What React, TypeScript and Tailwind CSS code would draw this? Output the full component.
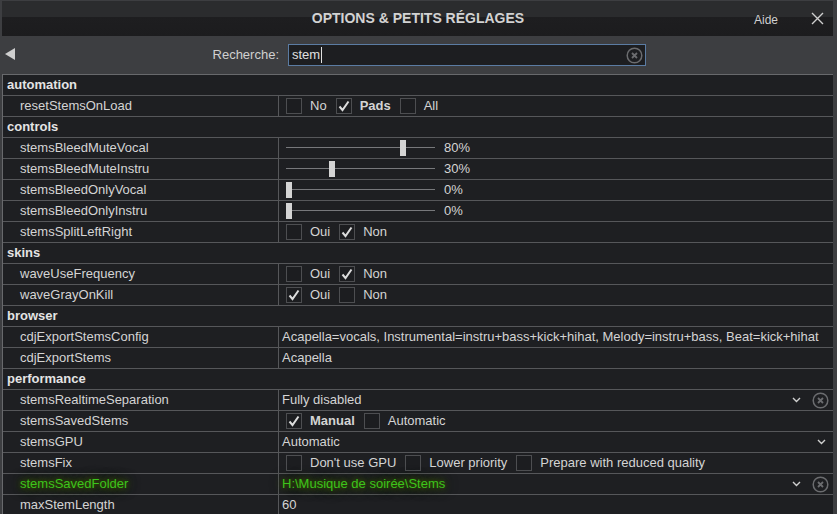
import React from 'react';

type Check = { label: string; checked?: boolean; bold?: boolean };

type Row =
  | { kind: 'cat'; name: string }
  | { kind: 'checks'; name: string; items: Check[] }
  | { kind: 'slider'; name: string; value: number }
  | { kind: 'text'; name: string; value: string }
  | { kind: 'select'; name: string; value: string; clear?: boolean; green?: boolean };

const rows: Row[] = [
  { kind: 'cat', name: 'automation' },
  {
    kind: 'checks',
    name: 'resetStemsOnLoad',
    items: [{ label: 'No' }, { label: 'Pads', checked: true, bold: true }, { label: 'All' }],
  },
  { kind: 'cat', name: 'controls' },
  { kind: 'slider', name: 'stemsBleedMuteVocal', value: 80 },
  { kind: 'slider', name: 'stemsBleedMuteInstru', value: 30 },
  { kind: 'slider', name: 'stemsBleedOnlyVocal', value: 0 },
  { kind: 'slider', name: 'stemsBleedOnlyInstru', value: 0 },
  { kind: 'checks', name: 'stemsSplitLeftRight', items: [{ label: 'Oui' }, { label: 'Non', checked: true }] },
  { kind: 'cat', name: 'skins' },
  { kind: 'checks', name: 'waveUseFrequency', items: [{ label: 'Oui' }, { label: 'Non', checked: true }] },
  { kind: 'checks', name: 'waveGrayOnKill', items: [{ label: 'Oui', checked: true }, { label: 'Non' }] },
  { kind: 'cat', name: 'browser' },
  {
    kind: 'text',
    name: 'cdjExportStemsConfig',
    value: 'Acapella=vocals, Instrumental=instru+bass+kick+hihat, Melody=instru+bass, Beat=kick+hihat',
  },
  { kind: 'text', name: 'cdjExportStems', value: 'Acapella' },
  { kind: 'cat', name: 'performance' },
  { kind: 'select', name: 'stemsRealtimeSeparation', value: 'Fully disabled', clear: true },
  {
    kind: 'checks',
    name: 'stemsSavedStems',
    items: [{ label: 'Manual', checked: true, bold: true }, { label: 'Automatic' }],
  },
  { kind: 'select', name: 'stemsGPU', value: 'Automatic' },
  {
    kind: 'checks',
    name: 'stemsFix',
    items: [{ label: "Don't use GPU" }, { label: 'Lower priority' }, { label: 'Prepare with reduced quality' }],
  },
  { kind: 'select', name: 'stemsSavedFolder', value: 'H:\\Musique de soirée\\Stems', clear: true, green: true },
  { kind: 'text', name: 'maxStemLength', value: '60' },
];

// green highlight for the recently changed setting
const glow = 'text-[#3cc41c] [text-shadow:0_0_5px_#3f5c04,0_0_9px_#3a5504,0_0_14px_#2c4203]';

function Box({ checked }: { checked?: boolean }) {
  return (
    <span className="flex h-[16px] w-[16px] shrink-0 items-center justify-center border border-[#4d4e51] bg-[#1c1d20]">
      {checked && (
        <svg width="14" height="14" viewBox="0 0 14 14">
          <polyline points="2.5,7.5 5.5,11 11.5,2.5" fill="none" stroke="#dcdcdc" strokeWidth="2" />
        </svg>
      )}
    </span>
  );
}

function ClearIcon() {
  return (
    <svg width="17" height="17" viewBox="0 0 17 17">
      <circle cx="8.5" cy="8.5" r="7.3" fill="none" stroke="#6b6c6f" strokeWidth="1.5" />
      <path d="M6 6 L11 11 M11 6 L6 11" stroke="#6b6c6f" strokeWidth="1.8" />
    </svg>
  );
}

function Chevron() {
  return (
    <svg width="9" height="6" viewBox="0 0 9 6">
      <polyline points="1,1 4.5,4.5 8,1" fill="none" stroke="#d0d0d0" strokeWidth="1.4" />
    </svg>
  );
}

function Value({ row }: { row: Row }) {
  if (row.kind === 'checks') {
    return (
      <div className="flex items-center gap-[8px] pl-[7px]">
        {row.items.map((item) => (
          <React.Fragment key={item.label}>
            <Box checked={item.checked} />
            <span className={`mr-[1px] ${item.bold ? 'font-bold' : ''}`}>{item.label}</span>
          </React.Fragment>
        ))}
      </div>
    );
  }
  if (row.kind === 'slider') {
    return (
      <div className="flex items-center pl-[7px]">
        <div className="relative h-[16px] w-[149px]">
          <div className="absolute left-0 right-0 top-[7px] h-[1px] bg-[#77787b]" />
          <div
            className="absolute top-0 h-[16px] w-[6px] bg-[#d4d4d4]"
            style={{ left: `${(row.value / 100) * 143}px` }}
          />
        </div>
        <span className="ml-[9px]">{row.value}%</span>
      </div>
    );
  }
  if (row.kind === 'text') {
    return <div className="pl-[3px]">{row.value}</div>;
  }
  if (row.kind === 'select') {
    return (
      <div className="flex w-full items-center pl-[3px]">
        <span className={`flex-1 ${row.green ? glow : ''}`}>{row.value}</span>
        <span className={row.clear ? 'mr-[11px]' : 'mr-[7px]'}>
          <Chevron />
        </span>
        {row.clear && (
          <span className="mr-[4px]">
            <ClearIcon />
          </span>
        )}
      </div>
    );
  }
  return null;
}

export default function App() {
  return (
    <div className="h-[514px] w-[837px] overflow-hidden bg-[#3d3e41] pl-[2px] pr-[4px] pt-[1px] font-['Liberation_Sans',Arial,sans-serif] text-[13px] text-[#d4d4d4]">
      <div className="relative flex h-[35px] items-center justify-center bg-[linear-gradient(#2b2c2e_0%,#2b2c2e_46%,#1e1e20_46%,#1c1c1e_100%)]">
        <span className="pl-[1px] text-[14px] font-bold text-[#d2d2d2]">OPTIONS &amp; PETITS RÉGLAGES</span>
        <span className="absolute left-[752px] top-[10px] text-[12px] text-[#d0d0d0]">Aide</span>
        <svg className="absolute left-[809px] top-[11px]" width="13" height="13" viewBox="0 0 13 13">
          <path d="M1 1 L12 12 M12 1 L1 12" stroke="#cfcfcf" strokeWidth="1.4" />
        </svg>
      </div>

      <div className="relative flex h-[38px] items-center">
        <svg className="absolute left-[3px] top-[12px]" width="11" height="12" viewBox="0 0 11 12">
          <polygon points="10,0 10,12 0,6" fill="#cfcfcf" />
        </svg>
        <span className="w-[277px] text-right text-[#d0d0d0]">Recherche:</span>
        <div className="ml-[9px] flex h-[22px] w-[358px] items-center border border-[#5b7ca3] bg-[#1d1e21] pl-[3px] pr-[2px]">
          <span className="text-[#e0e0e0]">stem</span>
          <span className="ml-[1px] h-[16px] w-[1px] bg-[#e0e0e0]" />
          <span className="ml-auto">
            <ClearIcon />
          </span>
        </div>
      </div>

      <div className="border-l border-t border-[#68696c] bg-[#1e1f22]">
        {rows.map((row) =>
          row.kind === 'cat' ? (
            <div
              key={row.name}
              className="flex h-[21px] items-center border-b border-[#56575a] pl-[4px] font-bold text-[#e4e4e4]"
            >
              {row.name}
            </div>
          ) : (
            <div key={row.name} className="flex h-[21px] border-b border-[#56575a]">
              <div
                className={`flex w-[276px] shrink-0 items-center border-r border-[#56575a] pl-[17px] ${
                  row.kind === 'select' && row.green ? glow : ''
                }`}
              >
                {row.name}
              </div>
              <div className="flex min-w-0 flex-1 items-center whitespace-nowrap">
                <Value row={row} />
              </div>
            </div>
          )
        )}
      </div>
    </div>
  );
}
